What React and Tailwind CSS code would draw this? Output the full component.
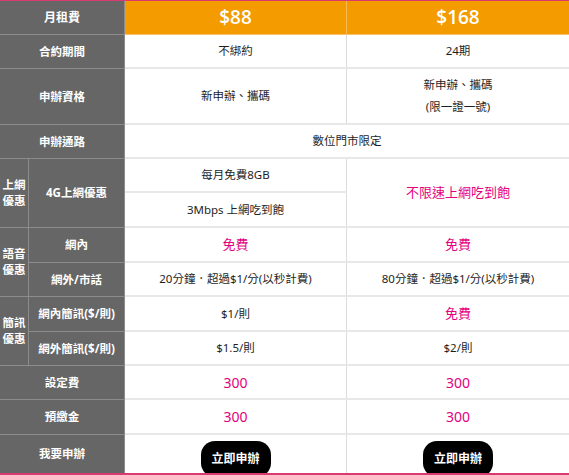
import React from 'react';

// Plan rows shown in the comparison table
const font = { fontFamily: '"Noto Sans", "Noto Sans CJK TC", sans-serif' };

const G = 'bg-[#666666] text-white font-bold text-[11.5px] flex items-center justify-center text-center border-b border-r border-[#8c8c8c]';
const D = 'bg-white text-[#1e1e1e] text-[11.5px] flex items-center justify-center text-center border-b-2 border-[#e8e8e8]';
const L = 'border-r border-r-[#dcdcdc]';
const PINK = 'text-[#e5007e] text-[13px]';

function Cell({ className, row, col, children }) {
  return (
    <div className={className} style={{ gridRow: row, gridColumn: col }}>
      {children}
    </div>
  );
}

function ApplyButton() {
  return (
    <button className="h-[36px] w-[70px] mt-[6px] rounded-[14px] bg-black text-white text-[12px] font-bold self-start">
      立即申辦
    </button>
  );
}

function GroupLabel({ row, top, bottom }) {
  return (
    <Cell className={G + ' flex-col text-[11.5px] leading-[16px]'} row={row} col="1">
      <span className="block h-[16px]">{top}</span>
      <span className="block h-[16px]">{bottom}</span>
    </Cell>
  );
}

export default function App() {
  return (
    <div className="w-[569px] h-[475px] bg-white border-t border-[#d93a6f] border-b-2 border-b-[#d93a6f] overflow-hidden" style={font}>
      <div
        className="grid grid-cols-[29px_96px_1fr_1fr] h-[472px] overflow-hidden"
        style={{ gridTemplateRows: '34px 34px 56px 34px 34px 35px 35px 34px 35px 34px 34px 35px 38px' }}
      >
        {/* header */}
        <Cell className={G + ' text-[12px]'} row="1" col="1 / 3">月租費</Cell>
        <Cell className="bg-[#f49b00] text-white text-[19px] font-semibold flex items-center justify-center border-b border-[#f6c46a] border-r border-r-[#f7b856]" row="1" col="3">
          <span style={{ fontFamily: '"Open Sans", sans-serif' }}>$88</span>
        </Cell>
        <Cell className="bg-[#f49b00] text-white text-[19px] font-semibold flex items-center justify-center border-b border-[#f6c46a]" row="1" col="4">
          <span style={{ fontFamily: '"Open Sans", sans-serif' }}>$168</span>
        </Cell>

        <Cell className={G} row="2" col="1 / 3">合約期間</Cell>
        <Cell className={`${D} ${L}`} row="2" col="3">不綁約</Cell>
        <Cell className={D} row="2" col="4">24期</Cell>

        <Cell className={G} row="3" col="1 / 3">申辦資格</Cell>
        <Cell className={`${D} ${L}`} row="3" col="3">新申辦、攜碼</Cell>
        <Cell className={`${D} flex-col leading-[22px]`} row="3" col="4">
          <span>新申辦、攜碼</span>
          <span>(限一證一號)</span>
        </Cell>

        <Cell className={G} row="4" col="1 / 3">申辦通路</Cell>
        <Cell className={D} row="4" col="3 / 5">數位門市限定</Cell>

        {/* data */}
        <GroupLabel row="5 / 7" top="上網" bottom="優惠" />
        <Cell className={G} row="5 / 7" col="2">4G上網優惠</Cell>
        <Cell className={`${D} ${L}`} row="5" col="3">每月免費8GB</Cell>
        <Cell className={`${D} ${L}`} row="6" col="3">3Mbps 上網吃到飽</Cell>
        <Cell className={`${D} ${PINK}`} row="5 / 7" col="4">不限速上網吃到飽</Cell>

        {/* voice */}
        <GroupLabel row="7 / 9" top="語音" bottom="優惠" />
        <Cell className={G} row="7" col="2">網內</Cell>
        <Cell className={`${D} ${L} ${PINK}`} row="7" col="3">免費</Cell>
        <Cell className={`${D} ${PINK}`} row="7" col="4">免費</Cell>
        <Cell className={G} row="8" col="2">網外/市話</Cell>
        <Cell className={`${D} ${L}`} row="8" col="3">20分鐘．超過$1/分(以秒計費)</Cell>
        <Cell className={D} row="8" col="4">80分鐘．超過$1/分(以秒計費)</Cell>

        {/* sms */}
        <GroupLabel row="9 / 11" top="簡訊" bottom="優惠" />
        <Cell className={G} row="9" col="2">網內簡訊($/則)</Cell>
        <Cell className={`${D} ${L}`} row="9" col="3">$1/則</Cell>
        <Cell className={`${D} ${PINK}`} row="9" col="4">免費</Cell>
        <Cell className={G} row="10" col="2">網外簡訊($/則)</Cell>
        <Cell className={`${D} ${L}`} row="10" col="3">$1.5/則</Cell>
        <Cell className={D} row="10" col="4">$2/則</Cell>

        <Cell className={G} row="11" col="1 / 3">設定費</Cell>
        <Cell className={`${D} ${L} text-[#e5007e] text-[14px]`} row="11" col="3">300</Cell>
        <Cell className={`${D} text-[#e5007e] text-[14px]`} row="11" col="4">300</Cell>

        <Cell className={G} row="12" col="1 / 3">預繳金</Cell>
        <Cell className={`${D} ${L} text-[#e5007e] text-[14px]`} row="12" col="3">300</Cell>
        <Cell className={`${D} text-[#e5007e] text-[14px]`} row="12" col="4">300</Cell>

        <Cell className="bg-[#666666] text-white font-bold text-[11.5px] flex items-center justify-center border-r border-[#8c8c8c]" row="13" col="1 / 3">我要申辦</Cell>
        <Cell className={`bg-white flex justify-center ${L}`} row="13" col="3">
          <ApplyButton />
        </Cell>
        <Cell className="bg-white flex justify-center" row="13" col="4">
          <ApplyButton />
        </Cell>
      </div>
    </div>
  );
}
